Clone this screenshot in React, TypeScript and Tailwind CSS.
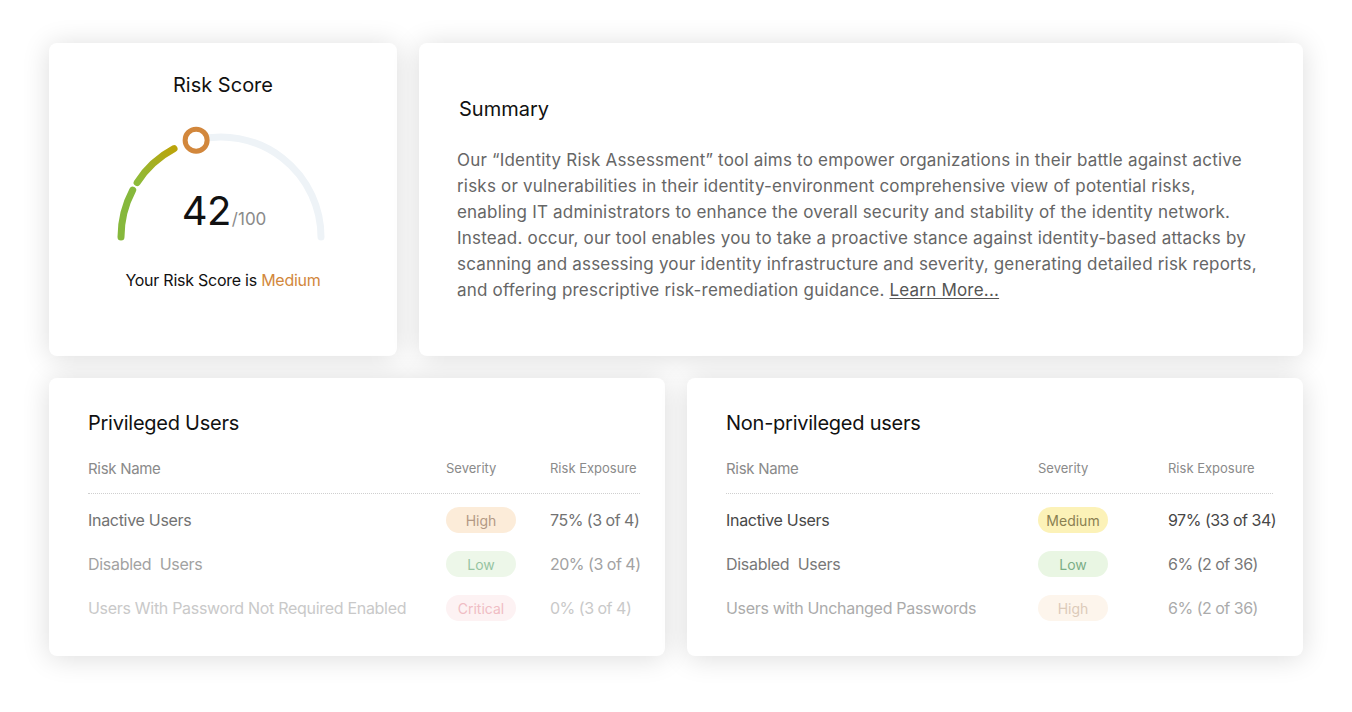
import React from 'react';

type Row = {
  name: string;
  severity: string;
  exposure: string;
  nameColor: string;
  pill: string;
};

const privilegedRows: Row[] = [
  { name: 'Inactive Users', severity: 'High', exposure: '75% (3 of 4)', nameColor: 'text-[#727272]', pill: 'bg-[#fcecd9] text-[#b39985]' },
  { name: 'Disabled  Users', severity: 'Low', exposure: '20% (3 of 4)', nameColor: 'text-[#a2a2a2]', pill: 'bg-[#edf7e9] text-[#96c4a2]' },
  { name: 'Users With Password Not Required Enabled', severity: 'Critical', exposure: '0% (3 of 4)', nameColor: 'text-[#c9c9c9]', pill: 'bg-[#fdf2f3] text-[#f0bdc4]' },
];

const nonPrivilegedRows: Row[] = [
  { name: 'Inactive Users', severity: 'Medium', exposure: '97% (33 of 34)', nameColor: 'text-[#474747]', pill: 'bg-[#fcf2b8] text-[#8a8052]' },
  { name: 'Disabled  Users', severity: 'Low', exposure: '6% (2 of 36)', nameColor: 'text-[#787878]', pill: 'bg-[#e9f6e3] text-[#7cae87]' },
  { name: 'Users with Unchanged Passwords', severity: 'High', exposure: '6% (2 of 36)', nameColor: 'text-[#ababab]', pill: 'bg-[#fdf5ec] text-[#dccab9]' },
];

function Gauge() {
  return (
    <div className="relative w-[220px] h-[120px]">
      <svg width="220" height="120" viewBox="0 0 220 120">
        <defs>
          <linearGradient id="seg2" x1="0" y1="1" x2="1" y2="0">
            <stop offset="0%" stopColor="#8dbb3a" />
            <stop offset="100%" stopColor="#bba40a" />
          </linearGradient>
        </defs>
        {/* track */}
        <path d="M 85.13 15.14 A 100 100 0 0 1 210 112" fill="none" stroke="#eef3f7" strokeWidth="7" strokeLinecap="round" />
        {/* filled segments */}
        <path d="M 10 112 A 100 100 0 0 1 21.7 65.05" fill="none" stroke="#86b83c" strokeWidth="7" strokeLinecap="round" />
        <path d="M 26.13 57.54 A 100 100 0 0 1 63.05 23.71" fill="none" stroke="url(#seg2)" strokeWidth="7" strokeLinecap="round" />
        {/* knob */}
        <circle cx="85.13" cy="15.14" r="11" fill="#fff" stroke="#d2873c" strokeWidth="5" />
      </svg>
      <div className="absolute left-0 right-0 top-[62px] flex items-baseline justify-center">
        <span className="text-[40px] leading-[48px] text-[#111] pl-[6px] tracking-[-0.5px]">42</span>
        <span className="text-[17px] text-[#8a8a8a] ml-[1px]">/100</span>
      </div>
    </div>
  );
}

function RiskTable({ title, rows, cols, width }: { title: string; rows: Row[]; cols: string; width: string }) {
  return (
    <div className="bg-white rounded-lg shadow-[0_2px_28px_rgba(0,0,0,0.14)] pt-[31px] pl-[39px]">
      <h2 className="text-[20px] leading-[28px] text-[#111] tracking-[-0.25px]">{title}</h2>
      <div className={width}>
        <div className={`grid ${cols} items-center mt-[20px] h-[24px] text-[#8a8a8a]`}>
          <span className="text-[15px] tracking-[-0.3px]">Risk Name</span>
          <span className="text-[13px]">Severity</span>
          <span className="text-[13px] whitespace-nowrap">Risk Exposure</span>
        </div>
        <div className="mt-[12px] border-t border-dotted border-[#cfcfcf]" />
        <div className="mt-[4px]">
          {rows.map((r) => (
            <div key={r.name} className={`grid ${cols} items-center h-[44px] text-[16px] tracking-[-0.3px] ${r.nameColor}`}>
              <span className="whitespace-pre">{r.name}</span>
              <span className={`w-[70px] h-[26px] rounded-full flex items-center justify-center text-[14px] tracking-normal ${r.pill}`}>{r.severity}</span>
              <span className="whitespace-nowrap tracking-[-0.5px]">{r.exposure}</span>
            </div>
          ))}
        </div>
      </div>
    </div>
  );
}

export default function App() {
  return (
    <div className="min-h-screen bg-white pt-[43px] pl-[49px] font-['Inter','Noto_Sans',sans-serif]">
      <div className="w-[1254px] flex flex-col gap-[22px]">
        <div className="grid grid-cols-[348px_1fr] gap-[22px] h-[313px]">
          {/* Risk score card */}
          <div className="bg-white rounded-lg shadow-[0_2px_28px_rgba(0,0,0,0.14)] flex flex-col items-center pt-[28px]">
            <h2 className="text-[20px] leading-[28px] text-[#111]">Risk Score</h2>
            <div className="mt-[26px] -ml-[4px]">
              <Gauge />
            </div>
            <p className="mt-[23px] text-[16px] leading-[24px] text-[#111] tracking-[-0.25px]">
              Your Risk Score is <span className="text-[#d2873c]">Medium</span>
            </p>
          </div>

          {/* Summary card */}
          <div className="bg-white rounded-lg shadow-[0_2px_28px_rgba(0,0,0,0.14)] pt-[52px] pl-[38px] pr-[30px]">
            <h2 className="text-[20px] leading-[28px] text-[#111] pl-[2px]">Summary</h2>
            <p className="mt-[24px] text-[17px] leading-[26px] text-[#666] tracking-[0.2px] whitespace-nowrap">
              Our “Identity Risk Assessment” tool aims to empower organizations in their battle against active
              <br />
              risks or vulnerabilities in their identity-environment comprehensive view of potential risks,
              <br />
              enabling IT administrators to enhance the overall security and stability of the identity network.
              <br />
              Instead. occur, our tool enables you to take a proactive stance against identity-based attacks by
              <br />
              scanning and assessing your identity infrastructure and severity, generating detailed risk reports,
              <br />
              and offering prescriptive risk-remediation guidance.{' '}
              <a className="underline text-[#555] underline-offset-2">Learn More...</a>
            </p>
          </div>
        </div>

        <div className="grid grid-cols-2 gap-[22px] h-[278px]">
          <RiskTable title="Privileged Users" rows={privilegedRows} cols="grid-cols-[358px_104px_1fr]" width="w-[552px]" />
          <RiskTable title="Non-privileged users" rows={nonPrivilegedRows} cols="grid-cols-[312px_130px_1fr]" width="w-[547px]" />
        </div>
      </div>
    </div>
  );
}
